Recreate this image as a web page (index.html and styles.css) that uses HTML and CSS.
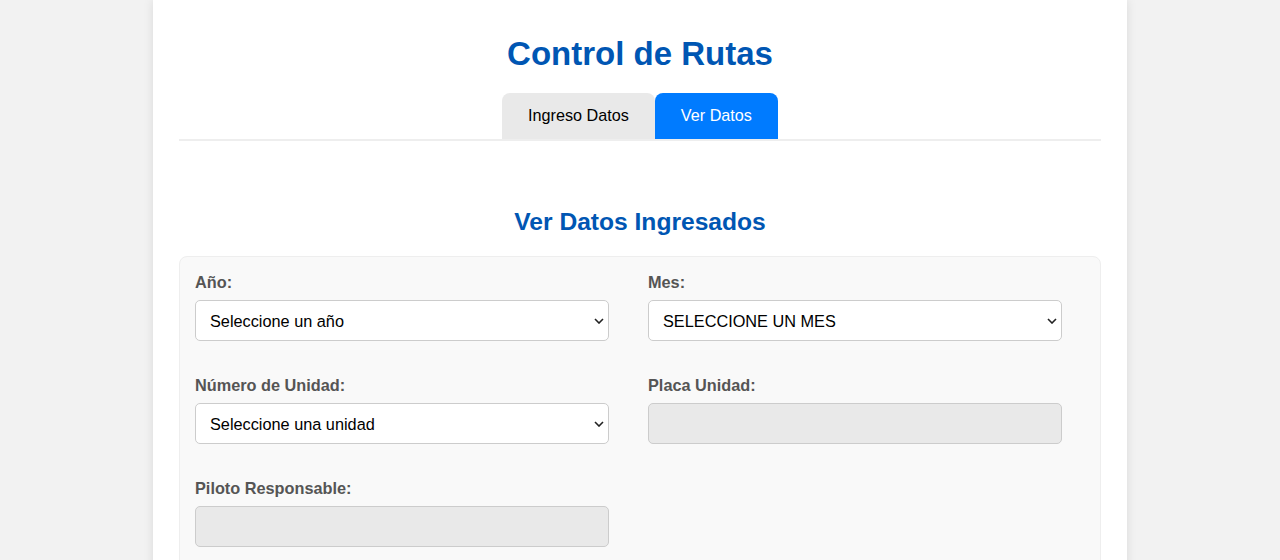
FILE: index.html
```html
<!DOCTYPE html>
<html lang="es">
<head>
<meta charset="utf-8">
<title>Control de Rutas</title>
<link rel="stylesheet" href="styles.css">
</head>
<body>
<div class="container">
  <h1 class="title">Control de Rutas</h1>
  <div class="tabs">
    <button class="tab">Ingreso Datos</button>
    <button class="tab active">Ver Datos</button>
  </div>
  <section class="view">
    <h2 class="subtitle">Ver Datos Ingresados</h2>
    <div class="panel">
      <div class="field">
        <label>Año:</label>
        <div class="select-wrap">
          <select class="control"><option>Seleccione un año</option></select>
          <svg class="chevron" width="10" height="6" viewBox="0 0 10 6"><path d="M1 1l4 4 4-4" fill="none" stroke="#222" stroke-width="1.6"/></svg>
        </div>
      </div>
      <div class="field">
        <label>Mes:</label>
        <div class="select-wrap">
          <select class="control"><option>SELECCIONE UN MES</option></select>
          <svg class="chevron" width="10" height="6" viewBox="0 0 10 6"><path d="M1 1l4 4 4-4" fill="none" stroke="#222" stroke-width="1.6"/></svg>
        </div>
      </div>
      <div class="field">
        <label>Número de Unidad:</label>
        <div class="select-wrap">
          <select class="control"><option>Seleccione una unidad</option></select>
          <svg class="chevron" width="10" height="6" viewBox="0 0 10 6"><path d="M1 1l4 4 4-4" fill="none" stroke="#222" stroke-width="1.6"/></svg>
        </div>
      </div>
      <div class="field">
        <label>Placa Unidad:</label>
        <input class="control" type="text" disabled>
      </div>
      <div class="field">
        <label>Piloto Responsable:</label>
        <input class="control" type="text" disabled>
      </div>
    </div>
  </section>
</div>
</body>
</html>
```
FILE: styles.css
```css
html, body {
  margin: 0;
  padding: 0;
}
body {
  background: #f2f2f2;
  font-family: "Liberation Sans", Arial, sans-serif;
  color: #000;
}
.container {
  width: 922px;
  margin: 0 auto;
  padding: 0 26px 40px;
  background: #fff;
  box-shadow: 0 0 10px rgba(0, 0, 0, 0.1);
  min-height: 600px;
}
.title {
  margin: 0;
  padding-top: 34px;
  text-align: center;
  color: #0056b3;
  font-size: 33px;
  line-height: 40px;
  font-weight: bold;
}
.tabs {
  margin-top: 19px;
  display: flex;
  justify-content: center;
  border-bottom: 2px solid #eee;
}
.tab {
  font-family: "Liberation Sans", Arial, sans-serif;
  font-size: 16.2px;
  line-height: 18px;
  padding: 13px 26px 15px;
  border: none;
  background: #e9e9e9;
  color: #000;
  border-radius: 8px 8px 0 0;
}
.tab.active {
  background: #007bff;
  color: #fff;
}
.subtitle {
  margin: 0;
  padding-top: 66px;
  text-align: center;
  color: #0056b3;
  font-size: 24.6px;
  line-height: 30px;
}
.panel {
  margin-top: 19px;
  background: #f9f9f9;
  border: 1px solid #eee;
  border-radius: 8px;
  padding: 16px 15px 30px;
  display: grid;
  grid-template-columns: 414px 414px;
  column-gap: 39px;
  row-gap: 35px;
}
.field label {
  display: block;
  font-weight: bold;
  font-size: 16.3px;
  line-height: 18px;
  color: #555;
  margin-bottom: 9px;
}
.select-wrap {
  position: relative;
}
.chevron {
  position: absolute;
  right: 5px;
  top: 18px;
  pointer-events: none;
}
.control {
  box-sizing: border-box;
  width: 100%;
  height: 41px;
  padding: 0 14px;
  font-family: "Liberation Sans", Arial, sans-serif;
  font-size: 16.3px;
  color: #000;
  background: #fff;
  border: 1px solid #ccc;
  border-radius: 5px;
  display: block;
  appearance: none;
  -webkit-appearance: none;
}
input.control:disabled {
  background: #e9e9e9;
}
```
